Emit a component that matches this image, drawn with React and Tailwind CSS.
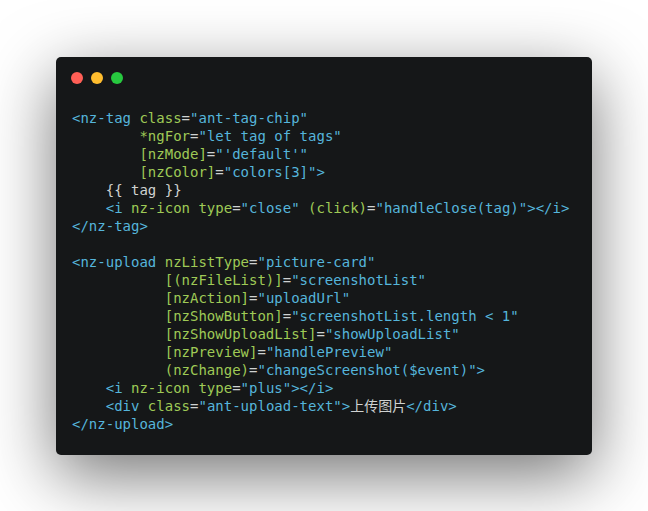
import React from "react";

const B = "text-[#55b5db]";
const G = "text-[#9fca56]";
const W = "text-[#cfd2d1]";

// each line is a list of [text, colour] tokens
const lines = [
  [["<nz-tag", B], [" class", G], ["=", W], ['"ant-tag-chip"', B]],
  [["        *ngFor", G], ["=", W], ['"let tag of tags"', B]],
  [["        [nzMode]", G], ["=", W], ["\"'default'\"", B]],
  [["        [nzColor]", G], ["=", W], ['"colors[3]"', B], [">", B]],
  [["    {{ tag }}", W]],
  [["    <i", B], [" nz-icon type", G], ["=", W], ['"close"', B], [" (click)", G], ["=", W], ['"handleClose(tag)"', B], ["></i>", B]],
  [["</nz-tag>", B]],
  [],
  [["<nz-upload", B], [" nzListType", G], ["=", W], ['"picture-card"', B]],
  [["           [(nzFileList)]", G], ["=", W], ['"screenshotList"', B]],
  [["           [nzAction]", G], ["=", W], ['"uploadUrl"', B]],
  [["           [nzShowButton]", G], ["=", W], ['"screenshotList.length < 1"', B]],
  [["           [nzShowUploadList]", G], ["=", W], ['"showUploadList"', B]],
  [["           [nzPreview]", G], ["=", W], ['"handlePreview"', B]],
  [["           (nzChange)", G], ["=", W], ['"changeScreenshot($event)"', B], [">", B]],
  [["    <i", B], [" nz-icon type", G], ["=", W], ['"plus"', B], ["></i>", B]],
  [["    <div", B], [" class", G], ["=", W], ['"ant-upload-text"', B], [">", B], ["上传图片", W], ["</div>", B]],
  [["</nz-upload>", B]],
];

const App = () => {
  return (
    <div className="w-[648px] h-[511px] bg-white pt-[57px] px-[56px] pb-[56px]">
      <div className="h-[398px] rounded-[5px] bg-[#151718] shadow-[0_20px_68px_rgba(0,0,0,0.55)] flex flex-col">
        {/* window controls */}
        <div className="flex gap-[8px] pl-[15px] pt-[15px]">
          <span className="w-[12px] h-[12px] rounded-full bg-[#ff5f56]" />
          <span className="w-[12px] h-[12px] rounded-full bg-[#ffbd2e]" />
          <span className="w-[12px] h-[12px] rounded-full bg-[#27c93f]" />
        </div>

        <pre className="mt-[25px] pl-[16px] text-[14px] leading-[18px] font-['DejaVu_Sans_Mono','Noto_Sans_CJK_SC',monospace]">
          {lines.map((line, i) => (
            <div key={i} className="h-[18px] whitespace-pre">
              {line.map(([t, c], j) => (
                <span key={j} className={c}>
                  {t}
                </span>
              ))}
            </div>
          ))}
        </pre>
      </div>
    </div>
  );
};

export default App;
